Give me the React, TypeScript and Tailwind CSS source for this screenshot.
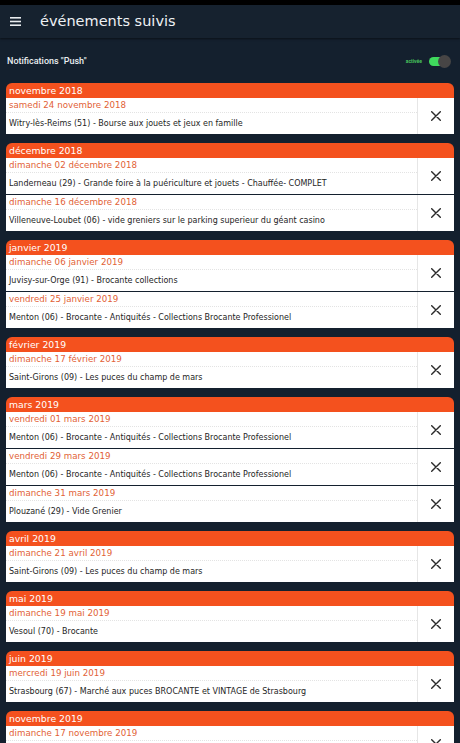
import React from "react";

type Item = { date: string; title: string };
type Group = { month: string; items: Item[] };

const groups: Group[] = [
  {
    month: "novembre 2018",
    items: [{ date: "samedi 24 novembre 2018", title: "Witry-lès-Reims (51) - Bourse aux jouets et jeux en famille" }],
  },
  {
    month: "décembre 2018",
    items: [
      { date: "dimanche 02 décembre 2018", title: "Landerneau (29) - Grande foire à la puériculture et jouets - Chauffée- COMPLET" },
      { date: "dimanche 16 décembre 2018", title: "Villeneuve-Loubet (06) - vide greniers sur le parking superieur du géant casino" },
    ],
  },
  {
    month: "janvier 2019",
    items: [
      { date: "dimanche 06 janvier 2019", title: "Juvisy-sur-Orge (91) - Brocante collections" },
      { date: "vendredi 25 janvier 2019", title: "Menton (06) - Brocante - Antiquités - Collections Brocante Professionel" },
    ],
  },
  {
    month: "février 2019",
    items: [{ date: "dimanche 17 février 2019", title: "Saint-Girons (09) - Les puces du champ de mars" }],
  },
  {
    month: "mars 2019",
    items: [
      { date: "vendredi 01 mars 2019", title: "Menton (06) - Brocante - Antiquités - Collections Brocante Professionel" },
      { date: "vendredi 29 mars 2019", title: "Menton (06) - Brocante - Antiquités - Collections Brocante Professionel" },
      { date: "dimanche 31 mars 2019", title: "Plouzané (29) - Vide Grenier" },
    ],
  },
  {
    month: "avril 2019",
    items: [{ date: "dimanche 21 avril 2019", title: "Saint-Girons (09) - Les puces du champ de mars" }],
  },
  {
    month: "mai 2019",
    items: [{ date: "dimanche 19 mai 2019", title: "Vesoul (70) - Brocante" }],
  },
  {
    month: "juin 2019",
    items: [{ date: "mercredi 19 juin 2019", title: "Strasbourg (67) - Marché aux puces BROCANTE et VINTAGE de Strasbourg" }],
  },
  {
    month: "novembre 2019",
    items: [{ date: "dimanche 17 novembre 2019", title: "Saint-Girons (09) - Les puces du champ de mars" }],
  },
];

function CloseIcon() {
  return (
    <svg width="10" height="10" viewBox="0 0 10 10" fill="none">
      <path d="M0.7 0.7L9.3 9.3M9.3 0.7L0.7 9.3" stroke="#2b2b2b" strokeWidth="1.4" strokeLinecap="round" />
    </svg>
  );
}

export default function App() {
  return (
    <div
      className="w-[460px] h-[743px] overflow-hidden bg-[#14202e] flex flex-col"
      style={{ fontFamily: '"DejaVu Sans", sans-serif' }}
    >
      <div className="h-[5px] bg-black shrink-0" />
      <div className="h-[33px] shrink-0 bg-[#16222f] flex items-center shadow-[0_1px_2px_rgba(0,0,0,0.5)]">
        <svg className="ml-[10px]" width="11" height="9" viewBox="0 0 11 9">
          <rect x="0" y="0" width="11" height="1.6" fill="#e8ecef" />
          <rect x="0" y="3.7" width="11" height="1.6" fill="#e8ecef" />
          <rect x="0" y="7.4" width="11" height="1.6" fill="#e8ecef" />
        </svg>
        <span className="ml-[19px] text-[14.5px] text-[#eef1f4] pt-[1px]">événements suivis</span>
      </div>

      <div className="h-[45px] shrink-0 flex items-center justify-between pl-[7px] pr-[12px] pt-[2px]">
        <span
          className="text-[9px] text-[#e9edf0] font-medium"
          style={{ fontFamily: "Roboto, sans-serif" }}
        >
          Notifications "Push"
        </span>
        <div className="flex items-center gap-[7px]">
          <span className="text-[5px] text-[#47c25c] font-bold" style={{ fontFamily: "Roboto, sans-serif" }}>
            activée
          </span>
          <div className="relative w-[19px] h-[9px] rounded-full bg-[#3fd95d]">
            <div className="absolute right-[-3px] top-[-2px] w-[13px] h-[13px] rounded-full bg-[#474545]" />
          </div>
        </div>
      </div>

      <div className="flex flex-col gap-[9px] px-[6px]">
        {groups.map((g) => (
          <div key={g.month} className="flex flex-col rounded-t-[6px] overflow-hidden">
            <div className="h-[15px] bg-[#f4511e] flex items-center pl-[3px] text-[9.3px] text-white">
              {g.month}
            </div>
            <div className="flex flex-col gap-[1px]">
              {g.items.map((it, i) => (
                <div key={i} className="h-[36px] bg-white flex">
                  <div className="flex-1 flex flex-col min-w-0">
                    <div className="h-[15px] flex items-center pl-[3px] pt-[1px] border-b border-dotted border-[#e3e3e3] text-[8.7px] text-[#e25f36] whitespace-nowrap">
                      {it.date}
                    </div>
                    <div className="flex-1 flex items-center pl-[3px] text-[8px] text-[#1e1e1e] whitespace-nowrap overflow-hidden">
                      {it.title}
                    </div>
                  </div>
                  <div className="w-[37px] border-l border-[#e6e6e6] flex items-center justify-center">
                    <CloseIcon />
                  </div>
                </div>
              ))}
            </div>
          </div>
        ))}
      </div>
    </div>
  );
}
